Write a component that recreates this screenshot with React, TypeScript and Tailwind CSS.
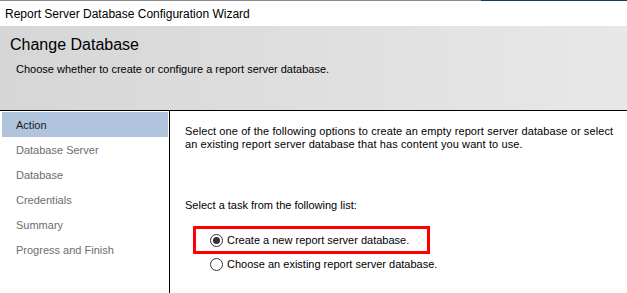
const steps = ["Action", "Database Server", "Database", "Credentials", "Summary", "Progress and Finish"];

function Radio({ checked }: { checked?: boolean }) {
  return (
    <span className="flex h-[13px] w-[13px] shrink-0 items-center justify-center rounded-full border border-[#333333] bg-white">
      {checked && <span className="h-[7px] w-[7px] rounded-full bg-[#333333]" />}
    </span>
  );
}

export default function App() {
  return (
    <div className="h-[293px] w-[627px] overflow-hidden bg-white font-['Liberation_Sans',Arial,sans-serif] text-[11px] leading-[13px] text-black">
      <div className="flex h-px">
        <div className="w-[481px] bg-[#8c8c8c]" />
        <div className="flex-1 bg-[#1c3a5c]" />
      </div>

      <div className="flex h-[25px] items-center pl-[5px] text-[12px] leading-none text-black">
        Report Server Database Configuration Wizard
      </div>

      <div className="h-[84px] bg-gradient-to-r from-[#d6d6d6] to-[#e8e8e8] pt-[10px]">
        <div className="pl-[10px] text-[16px] leading-[18px]">Change Database</div>
        <div className="mt-[9px] pl-[16px]">Choose whether to create or configure a report server database.</div>
      </div>

      <div className="flex h-[183px] border-t border-black">
        <div className="w-[170px] shrink-0 border-r border-black pl-[2px] pt-px">
          {steps.map((s, i) => (
            <div
              key={s}
              className={
                i === 0
                  ? "flex h-[25px] w-[166px] items-center bg-[#b0c4de] pl-[14px] pt-px text-[#1a1a1a]"
                  : "flex h-[25px] items-center pl-[14px] pt-px text-[#6d6d6d]"
              }
            >
              {s}
            </div>
          ))}
        </div>

        <div className="flex-1 pl-[15px] pt-[14px]">
          <p className="tracking-[0.1px]">
            Select one of the following options to create an empty report server database or select
            <br />
            an existing report server database that has content you want to use.
          </p>
          <p className="mt-[48px]">Select a task from the following list:</p>

          <div className="ml-[8px] mt-[14px] flex h-[28px] w-[237px] items-center gap-[4px] border-[3px] border-[#ff0000] pl-[14px]">
            <Radio checked />
            <span>Create a new report server database.</span>
          </div>
          <div className="ml-[25px] flex h-[20px] items-center gap-[4px]">
            <Radio />
            <span>Choose an existing report server database.</span>
          </div>
        </div>
      </div>
    </div>
  );
}
